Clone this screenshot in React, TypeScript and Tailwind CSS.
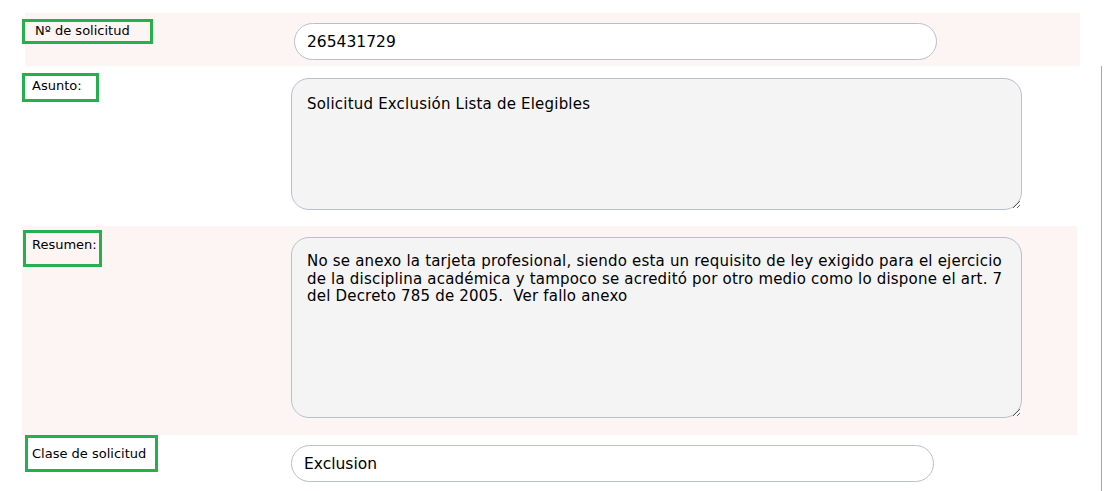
import React from "react";

const font = { fontFamily: '"DejaVu Sans", Verdana, sans-serif' };

export default function App() {
  const resumen =
    "No se anexo la tarjeta profesional, siendo esta un requisito de ley exigido para el ejercicio\nde la disciplina académica y tampoco se acreditó por otro medio como lo dispone el art. 7\ndel Decreto 785 de 2005.  Ver fallo anexo";
  return (
    <div
      className="relative w-[1104px] h-[491px] bg-white overflow-hidden text-black pt-[13px]"
      style={font}
    >
      {/* Row 1 */}
      <div className="ml-[25px] w-[1055px] h-[53px] bg-[#fdf5f4] flex">
        <div className="w-[269px] pl-[10px] pt-[10px] text-[13px] leading-[15px]">Nº de solicitud</div>
        <div className="pt-[10px]">
          <input
            readOnly
            value="265431729"
            className="w-[643px] h-[37px] rounded-full border border-[#b9bfcc] bg-white pl-[12px] text-[15.5px] outline-none"
            style={font}
          />
        </div>
      </div>

      <div className="w-[1102px] border-r border-[#a8a8a8]">
        {/* Row 2 */}
        <div className="h-[160px] flex">
          <div className="w-[291px] pl-[32px] pt-[12px] text-[13px] leading-[15px]">Asunto:</div>
          <div className="pt-[12px]">
            <textarea
              readOnly
              value="Solicitud Exclusión Lista de Elegibles"
              className="block w-[731px] h-[132px] rounded-[18px] border border-[#b9bfcc] bg-[#f4f4f4] px-[15px] pt-[17px] text-[15px] leading-[17.5px] tracking-[0.2px] outline-none"
              style={font}
            />
          </div>
        </div>

        {/* Row 3 */}
        <div className="ml-[22px] w-[1055px] h-[209px] bg-[#fdf5f4] flex">
          <div className="w-[269px] pl-[10px] pt-[11px] text-[13px] leading-[15px]">Resumen:</div>
          <div className="pt-[11px]">
            <textarea
              readOnly
              value={resumen}
              className="block w-[731px] h-[181px] rounded-[18px] border border-[#b9bfcc] bg-[#f4f4f4] px-[15px] pt-[15px] text-[15px] leading-[17.5px] tracking-[0.2px] outline-none overflow-hidden"
              style={font}
            />
          </div>
        </div>

        {/* Row 4 */}
        <div className="h-[56px] flex">
          <div className="w-[291px] pl-[32px] pt-[11px] text-[13px] leading-[15px]">Clase de solicitud</div>
          <div className="pt-[10px]">
            <input
              readOnly
              value="Exclusion"
              className="w-[643px] h-[37px] rounded-full border border-[#b9bfcc] bg-white pl-[12px] text-[15.5px] outline-none"
              style={font}
            />
          </div>
        </div>
      </div>

      {/* Green annotation boxes */}
      <div className="absolute left-[22px] top-[19px] w-[131px] h-[25px] border-[3px] border-[#22b14c] pointer-events-none" />
      <div className="absolute left-[22px] top-[73px] w-[77px] h-[29px] border-[3px] border-[#22b14c] pointer-events-none" />
      <div className="absolute left-[23px] top-[230px] w-[79px] h-[37px] border-[3px] border-[#22b14c] pointer-events-none" />
      <div className="absolute left-[25px] top-[435px] w-[133px] h-[37px] border-[3px] border-[#22b14c] pointer-events-none" />
    </div>
  );
}
